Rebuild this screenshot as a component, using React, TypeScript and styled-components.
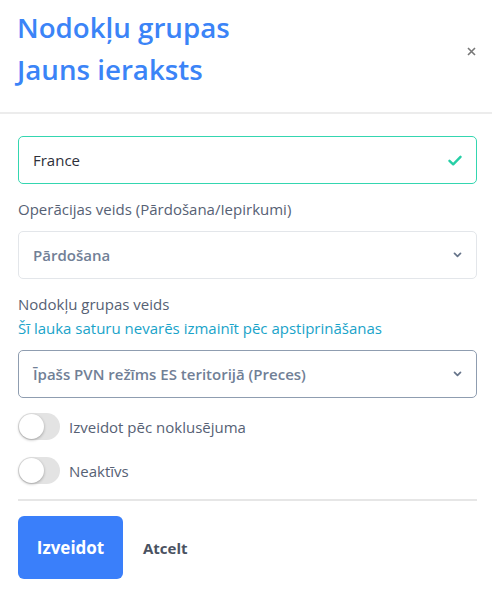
import React from "react";
import styled, { createGlobalStyle } from "styled-components";

const Global = createGlobalStyle`
  * { box-sizing: border-box; }
  body { margin: 0; background: #fff; font-family: "Open Sans", "Noto Sans", sans-serif; }
`;

const Modal = styled.div`
  width: 492px;
  background: #fff;
`;

const Header = styled.div`
  display: flex;
  align-items: flex-start;
  justify-content: space-between;
  padding: 6px 14px 0 18px;
  height: 114px;
  border-bottom: 2px solid #ececec;
`;

const Titles = styled.div`
  display: flex;
  flex-direction: column;
`;

const Title = styled.div`
  font-size: 27.7px;
  font-weight: 600;
  line-height: 42px;
  color: #3b84f7;
  margin-left: -1px;
`;

const Close = styled.button`
  border: none;
  background: none;
  padding: 0;
  width: 14px;
  height: 14px;
  display: flex;
  align-items: center;
  justify-content: center;
  color: #7a7a7a;
  margin-top: 38px;
`;

const Body = styled.div`
  padding: 22px 15px 0 18px;
  display: flex;
  flex-direction: column;
`;

const Field = styled.div<{ $border: string; $mb: number }>`
  height: 48px;
  border: 1.5px solid ${(p) => p.$border};
  border-radius: 5px;
  display: flex;
  align-items: center;
  justify-content: space-between;
  padding: 0 14px 0 14px;
  margin-bottom: ${(p) => p.$mb}px;
`;

const Value = styled.span<{ $strong?: boolean }>`
  font-size: 15px;
  font-weight: ${(p) => (p.$strong ? 600 : 400)};
  color: ${(p) => (p.$strong ? "#718096" : "#2d3039")};
`;

const Label = styled.div<{ $mb: number }>`
  font-size: 15px;
  line-height: 22px;
  color: #566174;
  margin-bottom: ${(p) => p.$mb}px;
`;

const Help = styled.div`
  font-size: 15px;
  line-height: 22px;
  color: #19a3c9;
  margin-bottom: 11px;
`;

const ToggleRow = styled.div<{ $mb: number }>`
  display: flex;
  align-items: center;
  gap: 9px;
  margin-bottom: ${(p) => p.$mb}px;
`;

const Track = styled.div`
  width: 42px;
  height: 27px;
  border-radius: 14px;
  background: #e3e3e3;
  position: relative;
  flex-shrink: 0;
`;

const Knob = styled.div`
  position: absolute;
  left: 1px;
  top: 1px;
  width: 25px;
  height: 25px;
  border-radius: 50%;
  background: #fff;
  box-shadow: 0 1px 3px rgba(0, 0, 0, 0.3);
`;

const ToggleLabel = styled.span`
  font-size: 15px;
  color: #566174;
`;

const Divider = styled.div`
  height: 2px;
  background: #e6e6e6;
  margin-bottom: 15px;
`;

const Actions = styled.div`
  display: flex;
  align-items: center;
  gap: 20px;
`;

const Primary = styled.button`
  height: 63px;
  width: 105px;
  border: none;
  border-radius: 6px;
  background: #3a7ffa;
  color: #fff;
  font-family: inherit;
  font-size: 17px;
  font-weight: 700;
`;

const Secondary = styled.button`
  border: none;
  background: none;
  padding: 0;
  font-family: inherit;
  font-size: 15px;
  font-weight: 700;
  color: #4a5261;
`;

const Chevron = () => (
  <svg width="9" height="6" viewBox="0 0 9 6">
    <path d="M1.5 1.3 L4.5 4.3 L7.5 1.3" fill="none" stroke="#66748a" strokeWidth="1.7" strokeLinecap="round" strokeLinejoin="round" />
  </svg>
);

const Check = () => (
  <svg width="14" height="11" viewBox="0 0 14 11">
    <path d="M1.5 5.8 L5.2 9.3 L12.5 1.8" fill="none" stroke="#26cfa6" strokeWidth="2.4" strokeLinecap="round" strokeLinejoin="round" />
  </svg>
);

const Toggle = ({ label, mb }: { label: string; mb: number }) => (
  <ToggleRow $mb={mb}>
    <Track>
      <Knob />
    </Track>
    <ToggleLabel>{label}</ToggleLabel>
  </ToggleRow>
);

export default function App() {
  return (
    <Modal>
      <Global />
      <Header>
        <Titles>
          <Title>Nodokļu grupas</Title>
          <Title>Jauns ieraksts</Title>
        </Titles>
        <Close aria-label="close">
          <svg width="9" height="9" viewBox="0 0 9 9">
            <path d="M1 1 L8 8 M8 1 L1 8" stroke="#777" strokeWidth="1.6" />
          </svg>
        </Close>
      </Header>
      <Body>
        <Field $border="#34d6b0" $mb={14}>
          <Value>France</Value>
          <Check />
        </Field>
        <Label $mb={11}>Operācijas veids (Pārdošana/Iepirkumi)</Label>
        <Field $border="#e3e6ea" $mb={14}>
          <Value $strong>Pārdošana</Value>
          <Chevron />
        </Field>
        <Label $mb={2}>Nodokļu grupas veids</Label>
        <Help>Šī lauka saturu nevarēs izmainīt pēc apstiprināšanas</Help>
        <Field $border="#8f9db0" $mb={15}>
          <Value $strong>Īpašs PVN režīms ES teritorijā (Preces)</Value>
          <Chevron />
        </Field>
        <Toggle label="Izveidot pēc noklusējuma" mb={17} />
        <Toggle label="Neaktīvs" mb={15} />
        <Divider />
        <Actions>
          <Primary>Izveidot</Primary>
          <Secondary>Atcelt</Secondary>
        </Actions>
      </Body>
    </Modal>
  );
}
